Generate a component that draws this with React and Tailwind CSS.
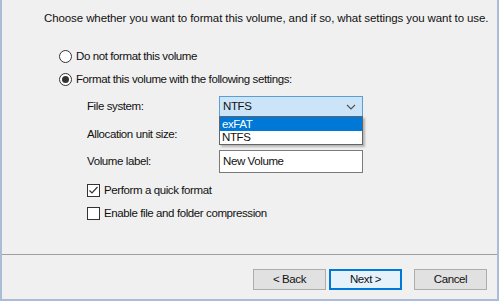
import React from 'react';

const Radio = ({ checked, label }) => (
  <div className="flex items-center h-[23px]">
    <span className="w-[13px] h-[13px] rounded-full border border-[#333333] bg-white flex items-center justify-center">
      {checked && <span className="w-[7px] h-[7px] rounded-full bg-[#333333]" />}
    </span>
    <span className="ml-[4px]">{label}</span>
  </div>
);

const Check = ({ checked, label }) => (
  <div className="flex items-center h-[23px]">
    <span className="w-[13px] h-[13px] border border-[#333333] bg-white flex items-center justify-center">
      {checked && (
        <svg width="11" height="11" viewBox="0 0 11 11" fill="none">
          <path d="M1.5 5.5 L4 8 L9.5 2" stroke="#333333" strokeWidth="1.2" />
        </svg>
      )}
    </span>
    <span className="ml-[4px]">{label}</span>
  </div>
);

const Button = ({ label, primary }) => (
  <div
    className={`w-[73px] h-[21px] flex items-center justify-center ${
      primary ? 'border-2 border-[#0078d7] bg-[#e5f1fb]' : 'border border-[#adadad] bg-[#e1e1e1]'
    }`}
  >
    {label}
  </div>
);

export default function App() {
  return (
    <div
      className="w-[499px] h-[301px] bg-[#f0f0f0] border-x-2 border-b-2 border-[#a9bdd6] flex flex-col text-[11.5px] tracking-[-0.4px] text-[#111111] overflow-hidden"
      style={{ fontFamily: '"Liberation Sans", Arial, sans-serif' }}
    >
      <div className="pl-[42px] pt-[10px] h-[45px] whitespace-nowrap tracking-[-0.1px]">
        Choose whether you want to format this volume, and if so, what settings you want to use.
      </div>

      <div className="pl-[57px]">
        <Radio label="Do not format this volume" />
        <Radio checked label="Format this volume with the following settings:" />
      </div>

      <div className="pl-[85px] pt-[5px] flex flex-col">
        <div className="flex items-center h-[21px]">
          <span className="w-[132px]">File system:</span>
          <div className="relative">
            <div className="w-[144px] h-[21px] border border-[#5a9fd6] bg-[#cce4f7] flex items-center justify-between pl-[3px] pr-[6px]">
              <span>NTFS</span>
              <svg width="10" height="6" viewBox="0 0 10 6" fill="none">
                <path d="M1 1 L5 5 L9 1" stroke="#555555" strokeWidth="1.2" />
              </svg>
            </div>
            <div className="absolute left-0 top-[20px] w-[144px] border border-[#646464] bg-white shadow-[2px_2px_2px_rgba(0,0,0,0.25)] z-10">
              <div className="h-[14px] leading-[14px] bg-[#0078d7] text-white pl-[2px]">exFAT</div>
              <div className="h-[13px] leading-[13px] pl-[2px]">NTFS</div>
            </div>
          </div>
        </div>

        <div className="flex items-center h-[28px] mt-[4px]">
          <span className="w-[132px]">Allocation unit size:</span>
        </div>

        <div className="flex items-center h-[23px] mt-[1px]">
          <span className="w-[132px]">Volume label:</span>
          <div className="w-[144px] h-[23px] border border-[#7a7a7a] bg-white flex items-center pl-[3px]">
            New Volume
          </div>
        </div>

        <div className="mt-[6px]">
          <Check checked label="Perform a quick format" />
          <Check label="Enable file and folder compression" />
        </div>
      </div>

      <div className="mt-auto border-t border-[#a0a0a0] h-[45px] flex items-start pt-[14px] justify-end pr-[10px]">
        <div className="flex items-center gap-[3px] mr-[12px]">
          <Button label="< Back" />
          <Button primary label="Next >" />
        </div>
        <Button label="Cancel" />
      </div>
    </div>
  );
}
